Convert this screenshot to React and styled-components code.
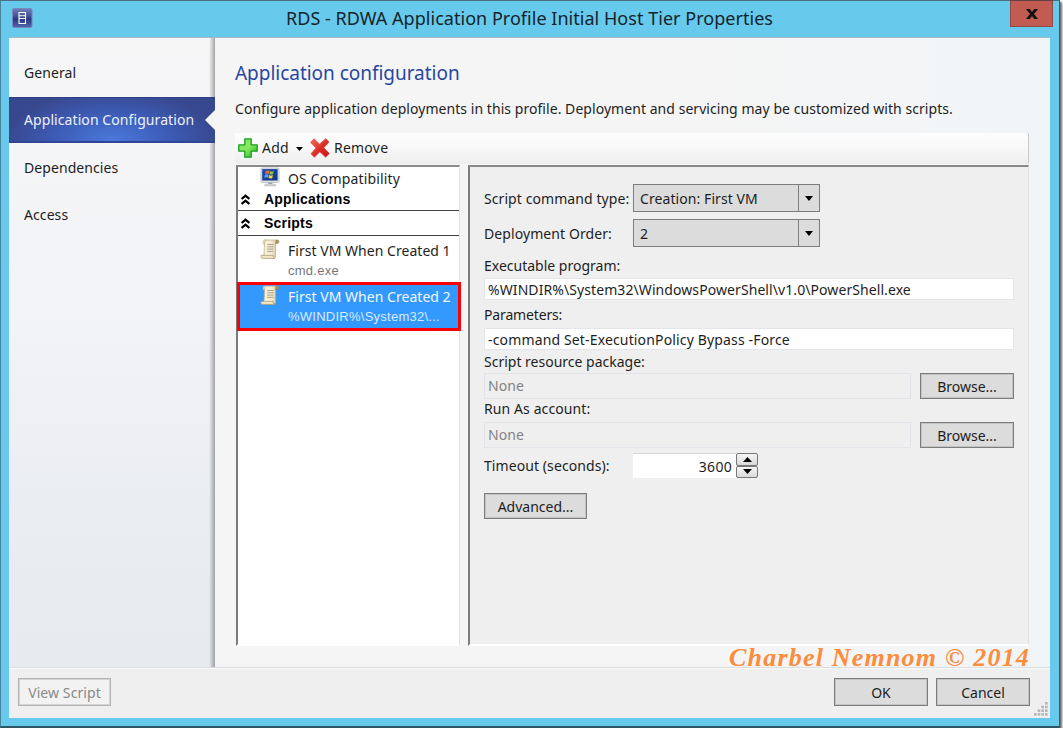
import React from 'react';
import styled, { createGlobalStyle, css } from 'styled-components';

const NAV = ['General', 'Application Configuration', 'Dependencies', 'Access'];

const App = () => {
	return (
		<>
			<GlobalStyle />
			<Window>
				<TitleBar>
					<AppIcon />
					<WindowTitle>RDS - RDWA Application Profile Initial Host Tier Properties</WindowTitle>
					<CloseButton aria-label='Close'>
						<svg width='12' height='10' viewBox='0 0 12 10'>
							<path d='M0 0h3.8L6 3 8.2 0H12L8 5l4 5H8.2L6 7 3.8 10H0l4-5z' fill='#111' />
						</svg>
					</CloseButton>
				</TitleBar>
				<Client>
					<Columns>
						<Sidebar>
							{NAV.map((label) => (
								<NavItem key={label} $active={label === 'Application Configuration'}>
									{label}
								</NavItem>
							))}
						</Sidebar>
						<Main>
							<Heading>Application configuration</Heading>
							<Description>
								Configure application deployments in this profile. Deployment and servicing may be customized with
								scripts.
							</Description>
							<Toolbar>
								<PlusIcon />
								<ToolLabel>Add</ToolLabel>
								<AddArrow />
								<CrossIcon />
								<ToolLabel>Remove</ToolLabel>
							</Toolbar>
							<Split>
								<Tree>
									<OsRow>
										<MonitorIcon />
										<span>OS Compatibility</span>
									</OsRow>
									<GroupRow $height={23}>
										<Chevrons />
										Applications
									</GroupRow>
									<GroupRow $height={25}>
										<Chevrons />
										Scripts
									</GroupRow>
									<ScriptRow>
										<ScrollIcon />
										<ScriptText>
											<ScriptName>First VM When Created 1</ScriptName>
											<ScriptPath>cmd.exe</ScriptPath>
										</ScriptText>
									</ScriptRow>
									<ScriptRow $selected>
										<ScrollIcon />
										<ScriptText>
											<ScriptName>First VM When Created 2</ScriptName>
											<ScriptPath $selected>{'%WINDIR%\\System32\\...'}</ScriptPath>
										</ScriptText>
									</ScriptRow>
								</Tree>
								<Details>
									<Field $height={28}>
										<InlineLabel>Script command type:</InlineLabel>
										<Combo value='Creation: First VM' />
									</Field>
									<Field $gap={7} $height={28}>
										<InlineLabel>Deployment Order:</InlineLabel>
										<Combo value='2' />
									</Field>
									<Label $gap={10}>Executable program:</Label>
									<TextBox $gap={3}>{'%WINDIR%\\System32\\WindowsPowerShell\\v1.0\\PowerShell.exe'}</TextBox>
									<Label $gap={6} $track={-0.15}>
										Parameters:
									</Label>
									<TextBox $gap={4} $track={0.15}>
										-command Set-ExecutionPolicy Bypass -Force
									</TextBox>
									<Label $gap={3}>Script resource package:</Label>
									<Field $gap={2} $height={26}>
										<DisabledBox>None</DisabledBox>
										<Button $width={94}>Browse...</Button>
									</Field>
									<Label $gap={1} $track={0.1}>
										Run As account:
									</Label>
									<Field $gap={4} $height={26}>
										<DisabledBox>None</DisabledBox>
										<Button $width={94}>Browse...</Button>
									</Field>
									<Field $gap={5} $height={25}>
										<InlineLabel>Timeout (seconds):</InlineLabel>
										<NumberBox>3600</NumberBox>
										<Spinner />
									</Field>
									<Field $gap={15} $height={26}>
										<Button $width={103}>Advanced...</Button>
									</Field>
								</Details>
							</Split>
						</Main>
					</Columns>
					<Footer>
						<Button $width={93} $disabled>
							View Script
						</Button>
						<FooterRight>
							<Button $width={94}>OK</Button>
							<Button $width={94}>Cancel</Button>
						</FooterRight>
						<Grip />
					</Footer>
				</Client>
				<Watermark>Charbel Nemnom © 2014</Watermark>
			</Window>
		</>
	);
};

const Combo = ({ value }) => (
	<ComboBox>
		<ComboValue>{value}</ComboValue>
		<ComboArrow>
			<svg width='8' height='5' viewBox='0 0 8 5'>
				<path d='M0 0h8L4 5z' fill='#000' />
			</svg>
		</ComboArrow>
	</ComboBox>
);

const Spinner = () => (
	<SpinnerBox>
		<SpinnerButton>
			<svg width='9' height='5' viewBox='0 0 9 5'>
				<path d='M0 5h9L4.5 0z' fill='#000' />
			</svg>
		</SpinnerButton>
		<SpinnerButton>
			<svg width='9' height='5' viewBox='0 0 9 5'>
				<path d='M0 0h9L4.5 5z' fill='#000' />
			</svg>
		</SpinnerButton>
	</SpinnerBox>
);

const AppIcon = () => (
	<svg width='21' height='20' viewBox='0 0 21 20'>
		<defs>
			<linearGradient id='app' x1='0' y1='0' x2='0' y2='1'>
				<stop offset='0' stopColor='#6f80b8' />
				<stop offset='0.45' stopColor='#3c4c94' />
				<stop offset='0.55' stopColor='#283680' />
				<stop offset='1' stopColor='#5368ae' />
			</linearGradient>
		</defs>
		<rect x='0.5' y='0.5' width='19.5' height='19' rx='1.5' fill='url(#app)' stroke='#7788ba' />
		<path d='M7 4.5h6.5v11H7zM7 7.8h6.5M7 10.5h6.5' fill='none' stroke='#fff' strokeWidth='1.1' />
	</svg>
);

const PlusIcon = () => (
	<svg width='20' height='20' viewBox='0 0 20 20'>
		<defs>
			<linearGradient id='plus' x1='0' y1='0' x2='1' y2='1'>
				<stop offset='0' stopColor='#7fe36b' />
				<stop offset='0.5' stopColor='#86e85d' />
				<stop offset='1' stopColor='#1fae24' />
			</linearGradient>
		</defs>
		<path
			d='M6.8 0.8h6.4v6h6v6.4h-6v6H6.8v-6h-6V6.8h6z'
			fill='url(#plus)'
			stroke='#19a023'
			strokeWidth='1.3'
			strokeLinejoin='round'
		/>
	</svg>
);

const CrossIcon = () => (
	<svg width='20' height='20' viewBox='0 0 20 20'>
		<defs>
			<linearGradient id='cross' x1='0' y1='0' x2='1' y2='1'>
				<stop offset='0' stopColor='#f4705f' />
				<stop offset='0.55' stopColor='#dc2a24' />
				<stop offset='1' stopColor='#c41616' />
			</linearGradient>
		</defs>
		<path
			d='M4 0.8 L9.6 6.2 L15.8 0.6 L19 4 L13.8 9.8 L19.4 15.6 L15.6 19.2 L9.8 13.8 L4.4 19.2 L1 15.8 L6 9.9 L0.6 4.4z'
			fill='url(#cross)'
			stroke='#d8453c'
			strokeWidth='0.7'
		/>
	</svg>
);

const AddArrow = () => (
	<ArrowSlot>
		<svg width='7' height='4' viewBox='0 0 7 4'>
			<path d='M0 0h7L3.5 4z' fill='#000' />
		</svg>
	</ArrowSlot>
);

const MonitorIcon = () => (
	<svg width='20' height='20' viewBox='0 0 20 20'>
		<defs>
			<linearGradient id='screen' x1='0' y1='0' x2='1' y2='1'>
				<stop offset='0' stopColor='#1f4db4' />
				<stop offset='1' stopColor='#0f3482' />
			</linearGradient>
		</defs>
		<rect x='0.9' y='0.9' width='18.2' height='14.6' rx='0.8' fill='#dcdfe4' stroke='#b4b8bf' strokeWidth='0.7' />
		<rect x='2.2' y='2.1' width='15.4' height='11.4' fill='url(#screen)' />
		<path d='M5.6 4.2q1.9-1.4 3.8-.4l-.6 3.1q-1.9-1-3.8.3z' fill='#f0663a' />
		<path d='M9.9 4q1.8 1 3.8 0l-.6 3.1q-2 1-3.8 0z' fill='#8ac842' />
		<path d='M4.8 7.9q1.9-1.2 3.8-.3L8 10.7q-1.9-1-3.8.3z' fill='#58a3ea' />
		<path d='M9.1 7.9q1.9 1 3.8 0l-.6 3q-1.9 1-3.8.1z' fill='#f9cf3a' />
		<path d='M8 15.6h4.4v1.4H8z' fill='#9ba2ab' />
		<path d='M5.2 17h9.8l.9 2H4.3z' fill='#cfd3d8' stroke='#b3b8be' strokeWidth='0.5' />
	</svg>
);

const ScrollIcon = () => (
	<svg width='20' height='21' viewBox='0 0 20 21'>
		<defs>
			<linearGradient id='paper' x1='0' y1='0' x2='1' y2='0'>
				<stop offset='0' stopColor='#f8f1dc' />
				<stop offset='0.6' stopColor='#f3ebd3' />
				<stop offset='1' stopColor='#d9c89c' />
			</linearGradient>
		</defs>
		<path d='M4.6 1h12.2L15.6 4v14.6H3.4L4.2 14z' fill='url(#paper)' stroke='#b8a980' strokeWidth='0.7' />
		<path d='M4.4 1Q2.8 1 3.1 3v2l1.6-.4V3Q5 1 6.4 1z' fill='#efe4c4' stroke='#b8a980' strokeWidth='0.5' />
		<path d='M16.2 1q2.6-.4 2.8 1.6-.2 1.8-1.6 1.8h-1.7Q15.2 2 16.6 1z' fill='#b09460' stroke='#8f7a4c' strokeWidth='0.5' />
		<path d='M1 16.4h12.2q-.6 2.2 1.6 3H2.6Q.2 19.2 1 16.4z' fill='#f2e7c6' stroke='#a8976a' strokeWidth='0.7' />
		<path d='M7.3 5.5h6.2M7.3 7.8h6.2M7 10.1h6.2M7 12.4h6.2' stroke='#a59b82' strokeWidth='0.9' />
	</svg>
);

const Chevrons = () => (
	<svg width='9' height='11' viewBox='0 0 9 11'>
		<path d='M0.6 5 L4.5 1.6 L8.4 5 M0.6 10 L4.5 6.6 L8.4 10' fill='none' stroke='#000' strokeWidth='2.2' />
	</svg>
);

const GRIP_DOTS = [
	[11, 0],
	[7.3, 3.7],
	[11, 3.7],
	[3.7, 7.4],
	[7.3, 7.4],
	[11, 7.4],
	[0, 11.1],
	[3.7, 11.1],
	[7.3, 11.1],
	[11, 11.1],
];

const Grip = () => (
	<GripSvg width='14' height='14' viewBox='0 0 14 14'>
		{GRIP_DOTS.map(([x, y]) => (
			<rect key={`${x}-${y}`} x={x} y={y} width='2.6' height='2.6' fill='#b5b5b5' />
		))}
	</GripSvg>
);

const GlobalStyle = createGlobalStyle`
	* {
		box-sizing: border-box;
	}

	body {
		margin: 0;
		background: #fff;
		color: #1e1e1e;
		font-family: 'Noto Sans', 'Open Sans', sans-serif;
		font-size: 14px;
		line-height: 18px;
		letter-spacing: 0.08px;
		white-space: nowrap;
		overflow: hidden;
	}

	svg {
		display: block;
		flex: none;
	}
`;

const Window = styled.div`
	position: relative;
	display: flex;
	flex-direction: column;
	width: 1060px;
	height: 728px;
	padding: 0 9px 8px 8px;
	border: 1px solid #45849c;
	border-top-color: #4b6f7c;
	border-right-color: #3f5a66;
	border-bottom: 2px solid #2f5665;
	background: #67caec;
	box-shadow: 2px 2px 2px #6b6b6b;
`;

const TitleBar = styled.div`
	position: relative;
	display: flex;
	justify-content: center;
	height: 36px;
	flex: none;

	> svg {
		position: absolute;
		left: 3px;
		top: 7px;
	}
`;

const WindowTitle = styled.div`
	font-size: 18px;
	line-height: 35px;
	letter-spacing: 0.03px;
	color: #14242b;
`;

const CloseButton = styled.button`
	position: absolute;
	right: -3px;
	top: -1px;
	display: flex;
	align-items: center;
	justify-content: center;
	width: 43px;
	height: 27px;
	padding: 0;
	border: 1px solid #8c4a48;
	border-top-color: #5e4143;
	background: #c25b51;
`;

const Client = styled.div`
	display: flex;
	flex-direction: column;
	flex: 1;
	border-top: 1px solid #a7b9c2;
	background: #f5f5f5;
`;

const Columns = styled.div`
	display: flex;
	flex: 1;
`;

const Sidebar = styled.div`
	display: flex;
	flex-direction: column;
	gap: 1.5px;
	width: 206px;
	padding-top: 11.5px;
	background:
		linear-gradient(90deg, rgba(120, 120, 124, 0), rgba(120, 120, 124, 0.65)) right / 6px 100% no-repeat,
		linear-gradient(#f6f6f7, #f3f4f7 40%, #e8ebf0 85%, #e7eaef);
`;

const NavItem = styled.div`
	position: relative;
	height: 46px;
	padding-left: 15px;
	line-height: 46px;

	${(props) =>
		props.$active &&
		css`
			border-top: 1px solid #2e3f85;
			border-bottom: 2px solid #2f4696;
			background: radial-gradient(ellipse 105px 48px at 50% 95%, #4a78da, #3c5bb5 55%, #38488f 100%);
			color: #eef1fa;
			line-height: 44px;

			&::after {
				content: '';
				position: absolute;
				right: 0;
				top: 12px;
				border: 10px solid transparent;
				border-left: 0;
				border-right-color: #f5f5f5;
			}
		`}
`;

const Main = styled.div`
	flex: 1;
	padding: 24px 20px 0;
	background: linear-gradient(90deg, #f5f5f5 60%, #f2f5f8 96%);
`;

const Heading = styled.div`
	font-size: 19px;
	line-height: 22px;
	letter-spacing: -0.03px;
	color: #2747a0;
`;

const Description = styled.div`
	margin-top: 16px;
	letter-spacing: 0.05px;
`;

const Toolbar = styled.div`
	display: flex;
	align-items: center;
	width: 794px;
	height: 31px;
	margin-top: 15px;
	padding: 0 3px 2px;
	border-right: 1px solid #c8c8c8;
	border-radius: 2px;
	background: linear-gradient(#fdfdfd, #f9f9f9 40%, #eee);
`;

const ToolLabel = styled.span`
	margin-left: 4px;
	letter-spacing: 0.25px;
`;

const ArrowSlot = styled.span`
	padding: 2px 7px 0 7px;
`;

const Split = styled.div`
	display: flex;
	justify-content: space-between;
	width: 793px;
	margin: 1px 0 0 1px;
`;

const sunken = css`
	height: 481px;
	border: solid;
	border-width: 2px 1px 2px 2px;
	border-color: #8a8a8a #e3e3e3 #fff #7c7c7c;
`;

const Tree = styled.div`
	${sunken}
	width: 224px;
	background: #fff;
`;

const OsRow = styled.div`
	display: flex;
	align-items: flex-start;
	gap: 8px;
	height: 21px;
	padding: 0 0 0 22px;
	letter-spacing: 0.17px;

	span {
		margin-top: 3px;
	}
`;

const GroupRow = styled.div`
	display: flex;
	align-items: center;
	gap: 14px;
	height: ${(props) => props.$height}px;
	padding-left: 3px;
	border-bottom: 1px solid #444;
	color: #000;
	font-family: 'Liberation Sans', Arial, sans-serif;
	font-weight: 700;
	letter-spacing: 0.2px;
`;

const ScriptRow = styled.div`
	display: flex;
	align-items: flex-start;
	height: 46px;
	padding: 3px 0 0 22px;

	${(props) =>
		props.$selected &&
		css`
			width: 224px;
			height: 49px;
			margin-left: -1px;
			padding: 0 0 0 20px;
			border: 3px solid #fb0007;
			background: #3399ff;
			color: #f2f8ff;
		`}
`;

const ScriptText = styled.div`
	margin-left: 8px;
`;

const ScriptName = styled.div`
	padding-top: 2px;
	line-height: 20px;
	letter-spacing: 0.03px;
`;

const ScriptPath = styled.div`
	color: ${(props) => (props.$selected ? '#d9ebff' : '#777')};
	font-family: 'Liberation Sans', Arial, sans-serif;
	font-size: 13px;
	line-height: 20px;
	letter-spacing: 0.25px;
`;

const Details = styled.div`
	${sunken}
	width: 561px;
	padding: 17px 14px 0;
	background: #efefef;
`;

const Field = styled.div`
	display: flex;
	justify-content: flex-start;
	height: ${(props) => props.$height}px;
	margin-top: ${(props) => props.$gap || 0}px;
`;

const Label = styled.div`
	height: 18px;
	margin-top: ${(props) => props.$gap}px;
	letter-spacing: ${(props) => props.$track || 0}px;
`;

const InlineLabel = styled.div`
	display: flex;
	align-items: center;
	width: 149px;
	padding-top: 1px;
`;

const ComboBox = styled.div`
	display: flex;
	width: 187px;
	border: 1px solid #7d7d7d;
	background: #dcdcdc;
`;

const ComboValue = styled.div`
	flex: 1;
	padding: 5px 0 0 6px;
`;

const ComboArrow = styled.div`
	display: flex;
	align-items: center;
	justify-content: center;
	width: 21px;
	border-left: 1px solid #7d7d7d;
`;

const TextBox = styled.div`
	height: 22px;
	margin-top: ${(props) => props.$gap}px;
	padding: 0 3px;
	border: 1px solid #e4e5ea;
	background: #fff;
	line-height: 22px;
	letter-spacing: ${(props) => props.$track || 0.08}px;
`;

const DisabledBox = styled.div`
	flex: 1;
	margin-right: 9px;
	padding-left: 3px;
	border: 1px solid #e3e4e9;
	color: #838383;
	line-height: 24px;
`;

const Button = styled.button`
	width: ${(props) => props.$width}px;
	height: 100%;
	padding: 1px 0 0;
	border: 1px solid #7d7d7d;
	outline: 1px solid rgba(125, 125, 125, 0.25);
	outline-offset: -2px;
	background: #dcdcdc;
	color: #1e1e1e;
	font: inherit;
	letter-spacing: 0;

	${(props) =>
		props.$disabled &&
		css`
			border-color: #b3b3b3;
			background: #f2f2f2;
			color: #8a8a8a;
			letter-spacing: 0.08px;
		`}
`;

const NumberBox = styled.div`
	width: 103px;
	padding-right: 4px;
	border-top: 1px solid #d5d5d5;
	background: #fff;
	line-height: 25px;
	letter-spacing: 0.3px;
	text-align: right;
`;

const SpinnerBox = styled.div`
	display: flex;
	flex-direction: column;
	width: 22px;
`;

const SpinnerButton = styled.div`
	display: flex;
	flex: 1;
	align-items: center;
	justify-content: center;
	border: 1px solid #777;
	border-radius: 2px;
	background: linear-gradient(#f6f6f6, #d9d9d9);
`;

const Footer = styled.div`
	position: relative;
	display: flex;
	justify-content: space-between;
	height: 51px;
	padding: 10px 20px 12px 9px;
	border-top: 1px solid #dcdcdc;
	background: #efefef;
	box-shadow: inset 0 1px #fbfbfb;
`;

const FooterRight = styled.div`
	display: flex;
	gap: 8px;
`;

const GripSvg = styled.svg`
	position: absolute;
	right: 2px;
	bottom: 2px;
`;

const Watermark = styled.div`
	position: absolute;
	left: 728px;
	top: 643px;
	color: #fd8c3c;
	font-family: 'Liberation Serif', 'Times New Roman', serif;
	font-size: 26px;
	font-style: italic;
	font-weight: 700;
	line-height: 28px;
	letter-spacing: 1.2px;
`;

export default App;
